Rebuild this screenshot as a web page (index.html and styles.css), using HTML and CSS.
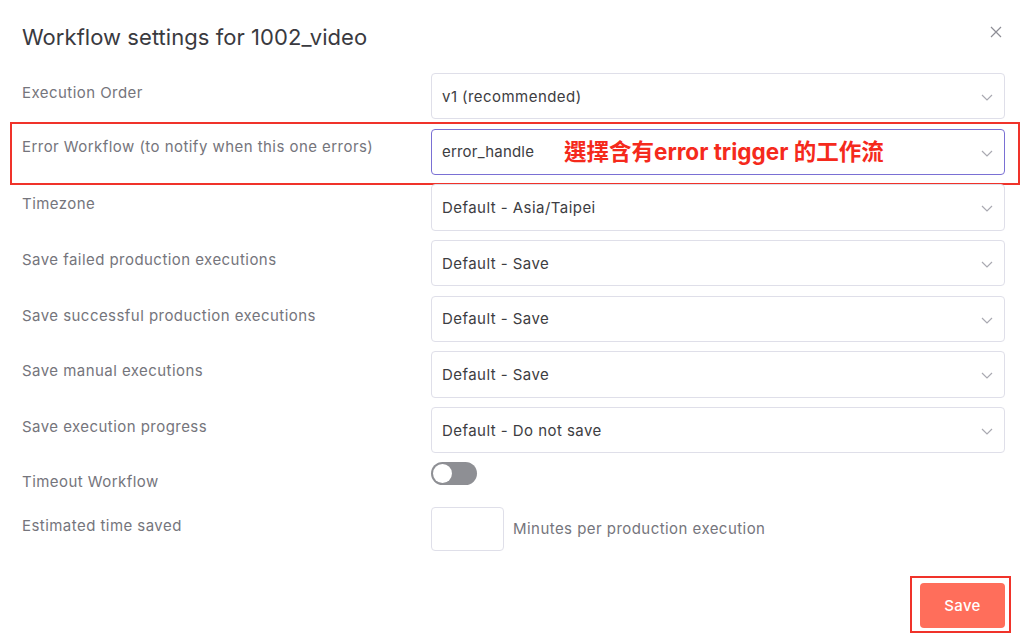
FILE: index.html
```html
<!DOCTYPE html>
<html>
<head>
<meta charset="utf-8">
<link rel="stylesheet" href="styles.css">
</head>
<body>
<div class="dialog">
  <div class="header">
    <h1 class="title">Workflow settings for 1002_video</h1>
    <button class="close" aria-label="Close">
      <svg width="12" height="12" viewBox="0 0 12 12"><path d="M1 1L11 11M11 1L1 11" stroke="#8d8d95" stroke-width="1.2" fill="none"/></svg>
    </button>
  </div>

  <div class="rows">
    <div class="row">
      <div class="label">Execution Order</div>
      <div class="select"><span class="value">v1 (recommended)</span><svg class="chev" width="12" height="7" viewBox="0 0 12 7"><path d="M1 1L6 6L11 1" stroke="#a9a9b1" stroke-width="1.2" fill="none"/></svg></div>
    </div>
    <div class="row highlight">
      <div class="label">Error Workflow (to notify when this one errors)</div>
      <div class="select focused"><span class="value">error_handle</span><span class="note">選擇含有error trigger 的工作流</span><svg class="chev" width="12" height="7" viewBox="0 0 12 7"><path d="M1 1L6 6L11 1" stroke="#a9a9b1" stroke-width="1.2" fill="none"/></svg></div>
    </div>
    <div class="row">
      <div class="label">Timezone</div>
      <div class="select"><span class="value">Default - Asia/Taipei</span><svg class="chev" width="12" height="7" viewBox="0 0 12 7"><path d="M1 1L6 6L11 1" stroke="#a9a9b1" stroke-width="1.2" fill="none"/></svg></div>
    </div>
    <div class="row">
      <div class="label">Save failed production executions</div>
      <div class="select"><span class="value">Default - Save</span><svg class="chev" width="12" height="7" viewBox="0 0 12 7"><path d="M1 1L6 6L11 1" stroke="#a9a9b1" stroke-width="1.2" fill="none"/></svg></div>
    </div>
    <div class="row">
      <div class="label">Save successful production executions</div>
      <div class="select"><span class="value">Default - Save</span><svg class="chev" width="12" height="7" viewBox="0 0 12 7"><path d="M1 1L6 6L11 1" stroke="#a9a9b1" stroke-width="1.2" fill="none"/></svg></div>
    </div>
    <div class="row">
      <div class="label">Save manual executions</div>
      <div class="select"><span class="value">Default - Save</span><svg class="chev" width="12" height="7" viewBox="0 0 12 7"><path d="M1 1L6 6L11 1" stroke="#a9a9b1" stroke-width="1.2" fill="none"/></svg></div>
    </div>
    <div class="row last-select">
      <div class="label">Save execution progress</div>
      <div class="select"><span class="value">Default - Do not save</span><svg class="chev" width="12" height="7" viewBox="0 0 12 7"><path d="M1 1L6 6L11 1" stroke="#a9a9b1" stroke-width="1.2" fill="none"/></svg></div>
    </div>
    <div class="row toggle-row">
      <div class="label">Timeout Workflow</div>
      <div class="control"><span class="toggle"><span class="knob"></span></span></div>
    </div>
    <div class="row time-row">
      <div class="label">Estimated time saved</div>
      <div class="control time-control"><span class="num-input"></span><span class="hint">Minutes per production execution</span></div>
    </div>
  </div>

  <div class="footer">
    <div class="save-wrap"><button class="save">Save</button></div>
  </div>
</div>
</body>
</html>
```

FILE: styles.css
```css
* { box-sizing: border-box; }
html, body { margin: 0; padding: 0; background: #fff; }
body {
  font-family: Inter, "Noto Sans CJK TC", sans-serif;
  width: 1024px;
  height: 637px;
  overflow: hidden;
}
.dialog {
  position: relative;
  padding: 23px 19px 0 22px;
}
.header {
  display: flex;
  justify-content: space-between;
  align-items: flex-start;
  margin-bottom: 22px;
}
.title {
  margin: 0;
  font-size: 22px;
  line-height: 28px;
  font-weight: 400;
  color: #3a3a3f;
  letter-spacing: 0.05px;
}
.close {
  border: 0;
  background: none;
  padding: 0;
  margin: 3px 3px 0 0;
  width: 12px;
  height: 12px;
  display: flex;
}
.row {
  display: flex;
  align-items: flex-start;
  margin-bottom: 9.4px;
  position: relative;
}
.label {
  width: 409px;
  flex: none;
  font-size: 15px;
  line-height: 20px;
  letter-spacing: 0.45px;
  color: #75757c;
  padding-top: 10px;
}
.select {
  position: relative;
  width: 574px;
  height: 46.3px;
  border: 1px solid #dfdfe9;
  border-radius: 4px;
  display: flex;
  align-items: center;
  padding: 0 10px;
  color: #3d3d42;
  font-size: 15px;
  letter-spacing: 0.45px;
}
.select .value { flex: 1; }
.select.focused { border-color: #7a70d4; }
.select.focused .value { flex: none; letter-spacing: 0.2px; }
.chev { position: absolute; right: 11px; top: 20px; }
.note {
  position: absolute;
  left: 132px;
  top: 8px;
  font-size: 22.5px;
  line-height: 28px;
  font-weight: 700;
  letter-spacing: 0;
  color: #f52a1c;
  white-space: nowrap;
}
.highlight .label { padding-top: 8px; }
.highlight::before {
  content: "";
  position: absolute;
  left: -12px;
  top: -7px;
  width: 1006px;
  height: 59px;
  border: 2.5px solid #f0332a;
}
.last-select { margin-bottom: 8.5px; }
.toggle-row { margin-bottom: 15px; }
.toggle-row .label { padding-top: 10px; }
.toggle {
  display: block;
  width: 46px;
  height: 23px;
  border-radius: 12px;
  background: #8e8f94;
  position: relative;
}
.knob {
  position: absolute;
  left: 2px;
  top: 2px;
  width: 19px;
  height: 19px;
  border-radius: 50%;
  background: #fff;
}
.time-row { margin-bottom: 0; }
.time-row .label { padding-top: 9px; }
.time-control {
  display: flex;
  align-items: center;
}
.num-input {
  width: 73px;
  height: 44px;
  border: 1px solid #dfdfe9;
  border-radius: 4px;
  margin-right: 9px;
}
.hint {
  font-size: 15px;
  letter-spacing: 0.45px;
  color: #75757c;
}
.footer {
  display: flex;
  justify-content: flex-end;
  margin-top: 25px;
}
.save-wrap {
  border: 2px solid #f0332a;
  padding: 5px 4px 3px 8px;
  margin-right: -6px;
}
.save {
  display: block;
  width: 85px;
  height: 45px;
  border: 0;
  border-radius: 4px;
  background: #ff6e5b;
  color: #fff;
  font-family: Inter, sans-serif;
  font-size: 15px;
  font-weight: 500;
  letter-spacing: 0.3px;
}
```
